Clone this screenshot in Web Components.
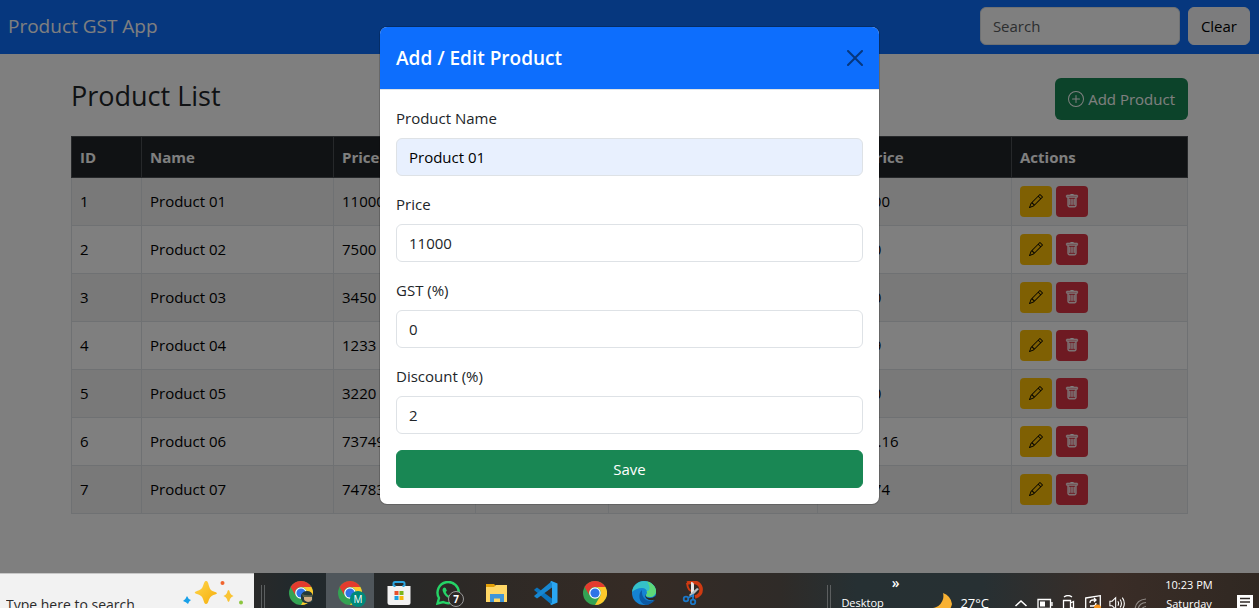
<!DOCTYPE html>
<html lang="en">
<head>
<meta charset="utf-8">
<title>Product GST App</title>
<style>
  html, body { margin: 0; height: 100%; }
  body {
    display: flex; flex-direction: column; overflow: hidden;
    font: 15px/24px "Open Sans", "Noto Sans", sans-serif; color: #212529; background: #fff;
    --blue: #0d6efd; --green: #198754; --line: #dee2e6;
  }
</style>
</head>
<body>
<product-app>
  <app-navbar heading="Product GST App"></app-navbar>
  <product-list heading="Product List"></product-list>
  <product-dialog slot="dialog" heading="Add / Edit Product">
    <form-field label="Product Name" value="Product 01" autofilled></form-field>
    <form-field label="Price" value="11000"></form-field>
    <form-field label="GST (%)" value="0"></form-field>
    <form-field label="Discount (%)" value="2"></form-field>
  </product-dialog>
</product-app>
<task-bar></task-bar>

<script>
const icons = {
  plus: '<svg viewBox="0 0 16 16" fill="currentColor"><path d="M8 15A7 7 0 1 1 8 1a7 7 0 0 1 0 14m0 1A8 8 0 1 0 8 0a8 8 0 0 0 0 16"/><path d="M8 4a.5.5 0 0 1 .5.5v3h3a.5.5 0 0 1 0 1h-3v3a.5.5 0 0 1-1 0v-3h-3a.5.5 0 0 1 0-1h3v-3A.5.5 0 0 1 8 4"/></svg>',
  pencil: '<svg viewBox="0 0 16 16" fill="currentColor"><path d="M12.146.146a.5.5 0 0 1 .708 0l3 3a.5.5 0 0 1 0 .708l-10 10a.5.5 0 0 1-.168.11l-5 2a.5.5 0 0 1-.65-.65l2-5a.5.5 0 0 1 .11-.168zM11.207 2.5 13.5 4.793 14.793 3.5 12.5 1.207zm1.586 3L10.5 3.207 4 9.707V10h.5a.5.5 0 0 1 .5.5v.5h.5a.5.5 0 0 1 .5.5v.5h.293zm-9.761 5.175-.106.106-1.528 3.821 3.821-1.528.106-.106A.5.5 0 0 1 5 12.5V12h-.5a.5.5 0 0 1-.5-.5V11h-.5a.5.5 0 0 1-.468-.325"/></svg>',
  trash: '<svg viewBox="0 0 16 16" fill="currentColor" stroke="currentColor" stroke-width=".5"><path d="M5.5 5.5A.5.5 0 0 1 6 6v6a.5.5 0 0 1-1 0V6a.5.5 0 0 1 .5-.5m2.5 0a.5.5 0 0 1 .5.5v6a.5.5 0 0 1-1 0V6a.5.5 0 0 1 .5-.5m3 .5a.5.5 0 0 0-1 0v6a.5.5 0 0 0 1 0z"/><path d="M14.5 3a1 1 0 0 1-1 1H13v9a2 2 0 0 1-2 2H5a2 2 0 0 1-2-2V4h-.5a1 1 0 0 1-1-1V2a1 1 0 0 1 1-1H6a1 1 0 0 1 1-1h2a1 1 0 0 1 1 1h3.500a1 1 0 0 1 1 1zM4.118 4 4 4.059V13a1 1 0 0 0 1 1h6a1 1 0 0 0 1-1V4.059L11.882 4zM2.500 3h11V2h-11z"/></svg>',
  close: '<svg viewBox="0 0 16 16"><path d="M.293.293a1 1 0 0 1 1.414 0L8 6.586 14.293.293a1 1 0 1 1 1.414 1.414L9.414 8l6.293 6.293a1 1 0 0 1-1.414 1.414L8 9.414l-6.293 6.293a1 1 0 0 1-1.414-1.414L6.586 8 .293 1.707a1 1 0 0 1 0-1.414"/></svg>',
  chrome: '<svg viewBox="0 0 24 24"><circle cx="12" cy="12" r="12" fill="#34a353"/><path d="M1.600 6A12 12 0 0 1 22.400 6H12a6 6 0 0 0-5.200 9z" fill="#e33b2e"/><path d="M22.400 6A12 12 0 0 1 12 24l5.200-9A6 6 0 0 0 12 6z" fill="#fdc92b"/><circle cx="12" cy="12" r="5.800" fill="#fff"/><circle cx="12" cy="12" r="4.600" fill="#2f74e8"/></svg>',
  store: '<svg viewBox="0 0 24 24"><path d="M6.500 6V2.500Q6.500 1 8 1h8q1.500 0 1.500 1.500V6" fill="none" stroke="#2aa5e0" stroke-width="2"/><path d="M.5 5h23v16.500q0 2.500-2.500 2.500H3Q.5 24 .5 21.500z" fill="#f2f2f2"/><path d="M6.500 4h2v2h-2zM15.500 4h2v2h-2z" fill="#2aa5e0"/><path d="M7.500 10h4v4h-4z" fill="#e8502b"/><path d="M12.500 10h4v4h-4z" fill="#7ab51d"/><path d="M7.500 15h4v4h-4z" fill="#1b9fe0"/><path d="M12.500 15h4v4h-4z" fill="#f6b80c"/></svg>',
  whatsapp: '<svg viewBox="0 0 24 24"><path d="M1.500 22.500 3 17A10.600 10.600 0 1 1 7.200 21z" fill="none" stroke="#25d366" stroke-width="2.400"/><path d="M8.200 6.500c-1.200.5-2 1.800-1.500 3.500 1 3.500 3.800 6.500 7.500 7.500 1.800.3 3.300-.8 3.400-2.600l-2.600-1.300-1.300 1.500c-2-.8-3.300-2.200-4-4l1.200-1.300-1.200-2.900z" fill="#25d366"/></svg>',
  folder: '<svg viewBox="0 0 24 24"><path d="M1 3h8l2 2h11v5H1z" fill="#e3a008"/><path d="M1 6h8l2-2h11v17H1z" fill="#ffd766"/><path d="M5 21v-8h14v8h-4v-3.500H9V21z" fill="#4095d8"/></svg>',
  code: '<svg viewBox="0 0 24 24"><path d="m1 8 2-1.500L18 17.500V24L0 9z" fill="#0b74bd"/><path d="m1 16 2 1.500L18 6.500V0L0 15z" fill="#1787d1"/><path d="m17.500 0 6 2.500v19l-6 2.500-1.500-1 2-1V2l-2-1z" fill="#2aa6f2"/></svg>',
  edge: '<svg viewBox="0 0 24 24"><circle cx="12" cy="12" r="12" fill="#1583d3"/><path d="M0 11C1 4 6 0 12 0c7 0 12 5 12 10 0 4-3 6-6 6-3 0-4-1-4-2 1-1 1-2 1-3 0-2-2-4-5-4-4 0-8 2-10 4" fill="#35c1c9"/><path d="M15 .4C20.500 2 24 6 24 10c0 4-3 6-6 6-3 0-4-1-4-2 1.500-1.500 1-3 .5-4C19 10 18 5 15 .4" fill="#5dd879"/><path d="M10 9c-4 3-4 13 4 15 4-.4 7-2.500 9-5-7 3-14-1-13-10" fill="#0c59a4"/><path d="M13.500 13q-.5 4 4.500 4 3 0 6-2.500l-1 4c-6 2-11-1-9.500-5.500" fill="#2c2825"/></svg>',
  snip: '<svg viewBox="0 0 24 24"><path d="M6 2q12-3 14 5 1 7-6 9" fill="none" stroke="#cf3a12" stroke-width="3.500"/><path d="M6 2q1 8 5 8" fill="none" stroke="#cf3a12" stroke-width="2"/><path d="M10 1q3 0 3 3v12h-3z" fill="#e8e8e8"/><path d="m18 8-8 8-2-2 8-7z" fill="#b9bdc0"/><circle cx="5" cy="18" r="2.300" fill="none" stroke="#1b78c8" stroke-width="1.800"/><circle cx="12" cy="21" r="2.300" fill="none" stroke="#1b78c8" stroke-width="1.800"/><path d="m7 17 5-3v5" fill="none" stroke="#1b78c8" stroke-width="1.800"/></svg>',
  face: '<svg viewBox="0 0 12 12"><path d="M0 4q2-4 6-4 5 0 6 5v5q-1 2-4 2H4Q1 11 0 8z" fill="#22383a"/><path d="M3 6q4-2 8 0v3q-1 2-4 2-4-1-4-3z" fill="#d3ae84"/><path d="M1 3q4 2 10 1v2H2z" fill="#58604a"/></svg>',
  sparkles: '<svg viewBox="0 0 64 30"><defs><linearGradient id="g" x2="1" y2="1"><stop stop-color="#ffd54a"/><stop offset="1" stop-color="#f5ae0c"/></linearGradient></defs><path d="M24 1c1.500 0 2 1 3 5s3 5 6 6 2 2 0 2.500-5 2-6 5-1.500 4.500-3 4.500-2-2-3-5-3-4-6-5-3-2 0-3 5-2 6-5 1.500-5 3-5" fill="url(#g)"/><path d="M46.500 10q1 0 1.500 3 1 2 3.500 3-2.500 1-3.500 3-.5 3-1.500 3T45 19q-1-2-3.500-3 2.500-1 3.500-3 .5-3 1.500-3" fill="#f9c435"/><path d="M5 16q1 3 4 4-2 1-3 4-2-2-5-3 3-2 4-5" fill="#18a0e8"/><circle cx="40.500" cy="3" r="2" fill="#f0642e"/><circle cx="59" cy="22.500" r="2" fill="#8cc63f"/></svg>',
  moon: '<svg viewBox="0 0 22 22"><path d="M13 0a12 12 0 0 1-13 15 12 12 0 0 0 22-4Q21 3 13 0" fill="#f8b133"/></svg>',
  chevron: '<svg viewBox="0 0 14 16"><path d="m1.500 11 5.500-5 5.500 5" fill="none" stroke="#fff" stroke-width="1.500"/></svg>',
  battery: '<svg viewBox="0 0 16 16"><path d="M1 4.500h12.500v9H1zM15 7v4" fill="none" stroke="#fff" stroke-width="1.300"/><path d="M3 6.500h5v5H3z" fill="#fff"/></svg>',
  camera: '<svg viewBox="0 0 14 16"><path d="M1.500 5.500h7v9h-7zM8.500 8l3-1.500v7l-3-1.500M2 2q4-3 8 0" fill="none" stroke="#fff" stroke-width="1.300"/></svg>',
  sync: '<svg viewBox="0 0 16 16"><path d="M.700 3 15.300.700v13H.700z" fill="none" stroke="#fff" stroke-width="1.300"/><path d="M5 8q0-3 3-3h2.500M9 3l2 2-2 2M11 8q0 3-3 3H5" fill="none" stroke="#fff" stroke-width="1.300"/><circle cx="12.500" cy="13" r="3.500" fill="#f7941d"/></svg>',
  volume: '<svg viewBox="0 0 18 16"><path d="M1 6h2.500L7.500 2v13L3.500 11H1zM10 6q1.500 2.500 0 5M12.500 4q3 4.500 0 9M15 2q4.500 6.500 0 13" fill="none" stroke="#fff" stroke-width="1.200"/></svg>',
  wifi: '<svg viewBox="0 0 14 16"><path d="M1 16Q1 5 12 4M4 16Q4 8 12 7.500M7.500 16q0-4 4.500-4.500" fill="none" stroke="#918b87" stroke-width="1.200"/></svg>',
  note: '<svg viewBox="0 0 16 16"><path d="M0 0h16v14H4l-4 2z" fill="#fff"/><path d="M3 3.500h10M3 7h10M3 10.500h7" stroke="#302a27" stroke-width="1.300"/></svg>'
};

class Base extends HTMLElement {
  connectedCallback() {
    if (this.shadowRoot) return;
    const t = document.createElement('template');
    t.innerHTML = `<style>*{box-sizing:border-box} button,input{font:inherit;margin:0} ${this.css()}</style>${this.html()}`;
    this.attachShadow({ mode: 'open' }).append(t.content.cloneNode(true));
  }
}

customElements.define('ui-icon', class extends Base {
  css() { return ':host{display:inline-block;flex:none;width:16px;height:16px} svg{display:block;width:100%;height:100%}'; }
  html() { return icons[this.getAttribute('name')]; }
});

customElements.define('product-app', class extends Base {
  css() { return `
    :host{display:block;position:relative;flex:1;min-height:0;overflow:hidden}
    .backdrop{position:absolute;inset:0;background:rgba(0,0,0,.5)}
    .layer{position:absolute;inset:0;display:flex;justify-content:center;align-items:flex-start;padding-top:26px}`; }
  html() { return '<slot></slot><div class="backdrop"></div><div class="layer"><slot name="dialog"></slot></div>'; }
});

customElements.define('app-navbar', class extends Base {
  css() { return `
    :host{display:block;background:var(--blue)}
    nav{display:flex;align-items:center;justify-content:space-between;padding:7px 9px 9px 8px}
    a{color:#fff;text-decoration:none;font-size:19px;line-height:30px}
    form{display:flex;gap:8px}
    input{width:200px;height:38px;padding:6px 12px;border:1px solid var(--line);border-radius:6px;background:#fff}
    input::placeholder{color:#595c5f;opacity:1}
    button{height:38px;padding:6px 12px;border:1px solid #f8f9fa;border-radius:6px;background:#f8f9fa;color:#000}`; }
  html() { return `<nav><a href="#">${this.getAttribute('heading')}</a>
    <form><input type="search" placeholder="Search" aria-label="Search"><button type="button">Clear</button></form></nav>`; }
});

const products = [
  [1, 'Product 01', 11000, 0, 2, '10780.00'],
  [2, 'Product 02', 7500, 0, 0, '7500.00'],
  [3, 'Product 03', 3450, 0, 0, '3450.00'],
  [4, 'Product 04', 1233, 0, 7, '1146.69'],
  [5, 'Product 05', 3220, 0, 0, '3220.00'],
  [6, 'Product 06', 737492, 0, 2, '722742.16'],
  [7, 'Product 07', 74783, 0, 22, '58330.74']
];

customElements.define('product-list', class extends Base {
  css() { return `
    :host{display:block;max-width:1141px;margin:0 auto;padding:24px 12px 0;box-sizing:border-box}
    header{display:flex;justify-content:space-between;margin-bottom:16px}
    h3{margin:0;font-size:27px;line-height:36px;font-weight:500}
    .add{display:flex;align-items:center;gap:4px;height:42px;padding:0 13px;border:0;border-radius:6px;background:var(--green);color:#fff}
    table{width:100%;table-layout:fixed;border-collapse:collapse;color:#000}
    th,td{padding:8px;border:1px solid var(--line);text-align:left;white-space:nowrap}
    thead th{background:#212529;color:#fff;border-color:#4d5154;font-weight:700}
    tbody tr:nth-child(odd){background:#f2f2f2}
    thead th{height:41px}
    td{height:48px;padding:7px 8px 8px}
    .acts{display:flex;gap:4px}
    .acts button{display:flex;align-items:center;justify-content:center;width:32px;height:31px;padding:0;border:0;border-radius:4px}
    .acts ui-icon{width:14px;height:14px}
    .edit{background:#ffc107;color:#000}.del{background:#dc3545;color:#fff}`; }
  html() {
    const widths = [70, 192, 142, 133, 209, 194, 176];
    const heads = ['ID', 'Name', 'Price', 'GST (%)', 'Discount (%)', 'Final Price', 'Actions'];
    return `<header><h3>${this.getAttribute('heading')}</h3>
      <button class="add" type="button"><ui-icon name="plus"></ui-icon>Add Product</button></header>
      <table><colgroup>${widths.map(w => `<col style="width:${w}px">`).join('')}</colgroup>
      <thead><tr>${heads.map(h => `<th scope="col">${h}</th>`).join('')}</tr></thead>
      <tbody>${products.map(p => `<tr>${p.map(v => `<td>${v}</td>`).join('')}<td><div class="acts">
        <button class="edit" type="button" aria-label="Edit"><ui-icon name="pencil"></ui-icon></button>
        <button class="del" type="button" aria-label="Delete"><ui-icon name="trash"></ui-icon></button></div></td></tr>`).join('')}</tbody></table>`;
  }
});

customElements.define('product-dialog', class extends Base {
  css() { return `
    :host{display:block;width:501px;max-width:100%;box-sizing:border-box;background:#fff;background-clip:padding-box;border:1px solid rgba(0,0,0,.175);border-radius:8px}
    header{display:flex;align-items:center;justify-content:space-between;padding:16px;background:var(--blue);color:#fff;border-bottom:1px solid var(--line);border-radius:7px 7px 0 0}
    h5{margin:0;font-size:19px;line-height:30px;font-weight:600}
    .close{display:flex;padding:0;border:0;background:none;opacity:.5}
    form{display:flex;flex-direction:column;gap:16px;padding:16px}
    .save{height:38px;border:1px solid var(--green);border-radius:6px;background:var(--green);color:#fff}`; }
  html() { return `<header><h5>${this.getAttribute('heading')}</h5>
    <button class="close" type="button" aria-label="Close"><ui-icon name="close"></ui-icon></button></header>
    <form><slot></slot><button class="save" type="button">Save</button></form>`; }
});

customElements.define('form-field', class extends Base {
  css() { return `
    :host{display:flex;flex-direction:column;gap:8px}
    input{width:100%;height:38px;padding:6px 12px;border:1px solid var(--line);border-radius:6px;background:#fff;color:#212529}
    :host([autofilled]) input{background:#e8f0fe;color:#000}`; }
  html() { return `<label for="f">${this.getAttribute('label')}</label><input id="f" type="text" value="${this.getAttribute('value')}">`; }
});

customElements.define('task-button', class extends Base {
  css() { return `
    :host{display:block;width:48px;height:40px}
    :host([active]) button{background:#4f565b}
    button{position:relative;display:flex;align-items:center;justify-content:center;width:100%;height:100%;padding:0;border:0;background:none}
    ui-icon{width:24px;height:24px}
    ::slotted(*){position:absolute;left:24px;top:18px}`; }
  html() { return `<button type="button" aria-label="${this.getAttribute('name')}"><ui-icon name="${this.getAttribute('name')}"></ui-icon><slot></slot></button>`; }
});

customElements.define('task-bar', class extends Base {
  css() { return `
    :host{display:block;flex:none;height:35px;overflow:hidden;color:#fff;background:linear-gradient(90deg,#292929 20%,#20292d 24%,#2c2926 36%,#352b25 50%,#2f2b28 62%,#263033 68%,#273033 78%,#3a2d27 88%,#302822)}
    .bar{display:flex;height:60px}
    .bar ui-icon{height:16px}
    .search{display:flex;align-items:center;justify-content:space-between;width:254px;padding:2px 8px 0 6px;background:#f2f2f2;border-top:1px solid #c8c8c8;color:#2b2b2b;font-size:14px}
    .search input{width:150px;padding:0;border:0;background:none;color:inherit}
    .search input::placeholder{color:#2b2b2b;opacity:1}
    .search ui-icon{width:64px;height:30px;align-self:flex-start;margin-top:4px}
    .grip{width:4px;margin-top:12px;border:solid #5c5f60;border-width:0 1px}
    .search+.grip{margin-left:7px}
    .apps{display:flex;gap:1px;flex:1;margin-left:12px}
    .bar .av{width:12px;height:12px}
    .m{width:16px;height:16px;border-radius:8px;background:#00897b;color:#fff;font:10px/16px "Open Sans",sans-serif}
    .n{width:16px;height:16px;border:1px solid #999;border-radius:8px;background:#2c2825;color:#fff;font:700 10px/14px "Open Sans",sans-serif}
    .desk{display:flex;gap:8px;width:89px;margin-left:10px;font-size:11px;line-height:20px}
    .desk span{padding-top:20px}
    .desk b{font-size:14px;font-weight:600;line-height:20px}
    .tray{display:flex;align-items:center;gap:8px;font-size:13px;padding-right:6px}
    .temp{margin-right:16px}
    .tray .moon{width:22px;height:22px;align-self:flex-start;margin-top:20px}
    .clock{width:64px;font-size:11px;line-height:19px;text-align:center;align-self:flex-start;padding-top:2px}
    .clock+ui-icon{margin-left:8px}`; }
  html() { return `<div class="bar">
    <label class="search"><input type="text" placeholder="Type here to search" aria-label="Type here to search"><ui-icon name="sparkles"></ui-icon></label>
    <div class="grip"></div>
    <div class="apps">
      <task-button name="chrome"><ui-icon class="av" name="face"></ui-icon></task-button>
      <task-button name="chrome" active><span class="m">M</span></task-button>
      <task-button name="store"></task-button><task-button name="whatsapp"><span class="n">7</span></task-button>
      <task-button name="folder"></task-button><task-button name="code"></task-button>
      <task-button name="chrome"></task-button><task-button name="edge"></task-button><task-button name="snip"></task-button>
    </div>
    <div class="grip"></div>
    <div class="desk"><span>Desktop</span><b>»</b></div>
    <div class="tray"><ui-icon class="moon" name="moon"></ui-icon><span class="temp">27°C</span>
      <ui-icon name="chevron"></ui-icon><ui-icon name="battery"></ui-icon><ui-icon name="camera"></ui-icon><ui-icon name="sync"></ui-icon><ui-icon name="volume"></ui-icon><ui-icon name="wifi"></ui-icon>
      <div class="clock">10:23 PM<br>Saturday</div><ui-icon name="note"></ui-icon></div>
  </div>`; }
});
</script>
</body>
</html>
